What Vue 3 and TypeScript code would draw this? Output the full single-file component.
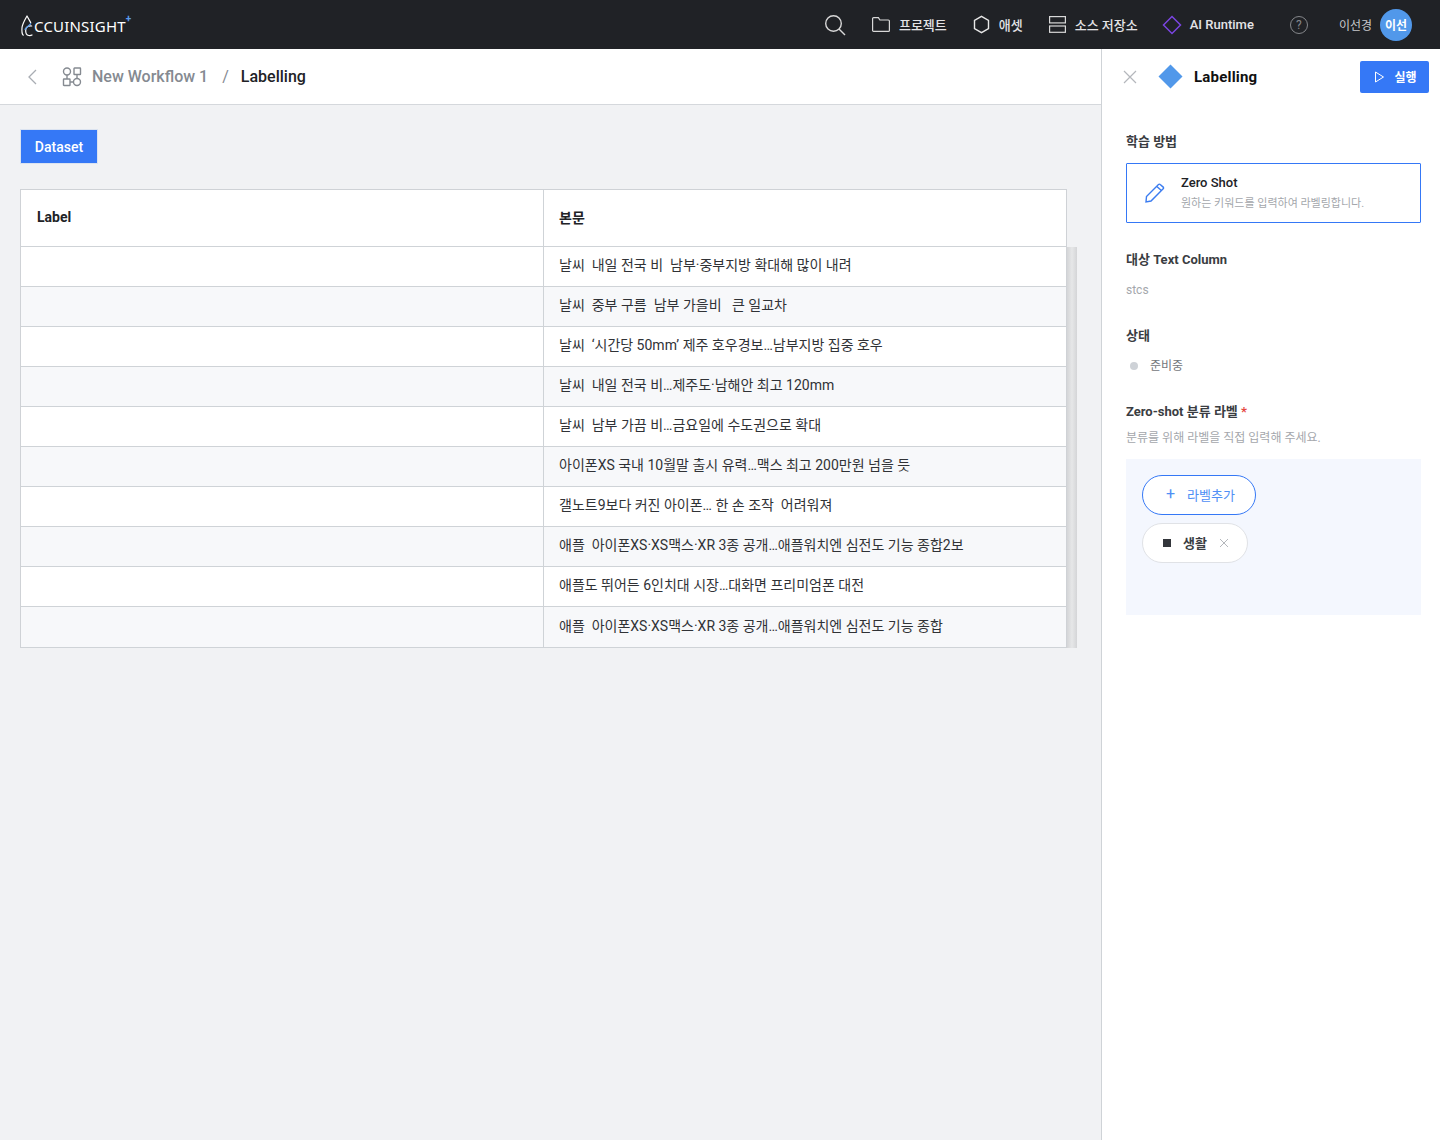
<script setup lang="ts">
interface Row {
  label: string;
  body: string;
}

const rows: Row[] = [
  { label: '', body: '날씨  내일 전국 비  남부·중부지방 확대해 많이 내려' },
  { label: '', body: '날씨  중부 구름  남부 가을비   큰 일교차' },
  { label: '', body: '날씨  ‘시간당 50mm’ 제주 호우경보…남부지방 집중 호우' },
  { label: '', body: '날씨  내일 전국 비…제주도·남해안 최고 120mm' },
  { label: '', body: '날씨  남부 가끔 비…금요일에 수도권으로 확대' },
  { label: '', body: '아이폰XS 국내 10월말 출시 유력…맥스 최고 200만원 넘을 듯' },
  { label: '', body: '갤노트9보다 커진 아이폰… 한 손 조작  어려워져' },
  { label: '', body: '애플  아이폰XS·XS맥스·XR 3종 공개…애플워치엔 심전도 기능 종합2보' },
  { label: '', body: '애플도 뛰어든 6인치대 시장…대화면 프리미엄폰 대전' },
  { label: '', body: '애플  아이폰XS·XS맥스·XR 3종 공개…애플워치엔 심전도 기능 종합' },
];
</script>

<template>
  <div class="app">
    <header class="topbar">
      <div class="logo">
        <svg width="16" height="22" viewBox="0 0 16 22" fill="none">
          <path d="M10.700 7.700C9.500 5.500 8.200 3 7 1C5 4.500 2.500 8.500 2 12.700C1.700 15.800 2 18.800 3.200 20.200" stroke="#fff" stroke-width="1.200" stroke-linecap="round" stroke-linejoin="round" />
          <path d="M11.700 11C8.500 10.800 6 12 5.700 15C5.500 18 6.800 20.200 8.800 20.500C10.500 20.700 11.500 20.300 12 20" stroke="#fff" stroke-width="1.200" stroke-linecap="round" />
          <path d="M5 14.300L10.700 8.700" stroke="#5b9bea" stroke-width="1.200" stroke-linecap="round" />
        </svg>
        <span class="logo-text">CCUINSIGHT</span>
        <span class="logo-plus">+</span>
      </div>
      <nav class="topnav">
        <svg class="search" width="22" height="22" viewBox="0 0 22 22" fill="none" stroke="#d8d8d8" stroke-width="1.400">
          <circle cx="9.500" cy="9.500" r="7.800" />
          <path d="M15 15l6 6" />
        </svg>
        <a class="nav-item project">
          <svg width="18" height="15" viewBox="0 0 18 15" fill="none" stroke="#d8d8d8" stroke-width="1.200">
            <path d="M.600 1.600a1 1 0 0 1 1-1h4.800l1.500 2.400h8.500a1 1 0 0 1 1 1v9.400a1 1 0 0 1-1 1H1.600a1 1 0 0 1-1-1z" />
          </svg>
          프로젝트
        </a>
        <a class="nav-item asset">
          <svg width="17" height="19" viewBox="0 0 17 19" fill="none" stroke="#e8e8e8" stroke-width="1.400">
            <path d="M8.500 1.300l7 4v8.400l-7 4-7-4V5.300z" />
          </svg>
          애셋
        </a>
        <a class="nav-item source">
          <svg width="17" height="17" viewBox="0 0 17 17" fill="none" stroke="#d8d8d8" stroke-width="1.200">
            <rect x=".600" y=".600" width="15.800" height="6.300" />
            <rect x=".600" y="10" width="15.800" height="6.300" />
          </svg>
          소스 저장소
        </a>
        <a class="nav-item runtime">
          <svg width="20" height="20" viewBox="0 0 20 20" fill="none" stroke="#7a45e0" stroke-width="1.500">
            <path d="M10 1.500L18.500 10L10 18.500L1.500 10z" />
          </svg>
          AI Runtime
        </a>
        <span class="help">?</span>
        <span class="user">이선경</span>
        <span class="avatar">이선</span>
      </nav>
    </header>

    <div class="body">
      <main class="main">
        <div class="crumbs">
          <svg class="back" width="10" height="16" viewBox="0 0 10 16" fill="none" stroke="#a9adb3" stroke-width="1.300">
            <path d="M9 1L2 8l7 7" />
          </svg>
          <svg class="flow" width="20" height="20" viewBox="0 0 20 20" fill="none" stroke="#858a91" stroke-width="1.400">
            <circle cx="5" cy="4.500" r="3.500" />
            <rect x="12" y="1" width="6.500" height="6.500" rx=".5" />
            <rect x="1.500" y="12" width="6.500" height="6.500" rx=".5" />
            <circle cx="15" cy="15" r="3.500" />
            <path d="M8 15h3.500M5 8v4M15 7.500v4" />
          </svg>
          <span class="crumb-parent">New Workflow 1</span>
          <span class="crumb-sep">/</span>
          <span class="crumb-current">Labelling</span>
        </div>

        <div class="content">
          <button class="dataset" type="button">Dataset</button>
          <div class="table-wrap">
            <div class="table">
              <div class="row head">
                <div class="cell">Label</div>
                <div class="cell">본문</div>
              </div>
              <div v-for="(row, i) in rows" :key="i" class="row" :class="{ odd: i % 2 === 1 }">
                <div class="cell">{{ row.label }}</div>
                <div class="cell">{{ row.body }}</div>
              </div>
            </div>
            <div class="scroll"></div>
          </div>
        </div>
      </main>

      <aside class="panel">
        <div class="panel-head">
          <svg class="close" width="14" height="14" viewBox="0 0 14 14" fill="none" stroke="#b4b7bc" stroke-width="1.200">
            <path d="M1 1l12 12M13 1L1 13" />
          </svg>
          <span class="diamond"></span>
          <span class="panel-title">Labelling</span>
          <button class="run" type="button">
            <svg width="11" height="12" viewBox="0 0 11 12" fill="none" stroke="#fff" stroke-width="1">
              <path d="M1.500 1l8 5-8 5z" />
            </svg>
            실행
          </button>
        </div>

        <div class="panel-body">
          <h4 class="section-title">학습 방법</h4>
          <div class="method">
            <svg width="22" height="22" viewBox="0 0 22 22" fill="none" stroke="#3b7cf0" stroke-width="1.400">
              <path d="M2.500 14.500L14.500 2.500a1.200 1.200 0 0 1 1.700 0l3 2.600a1.200 1.200 0 0 1 0 1.700L7 19l-5 1z" />
              <path d="M12.800 4.500l4.600 4" />
            </svg>
            <div>
              <div class="method-name">Zero Shot</div>
              <div class="method-desc">원하는 키워드를 입력하여 라벨링합니다.</div>
            </div>
          </div>

          <h4 class="section-title column-title">대상 Text Column</h4>
          <div class="muted stcs">stcs</div>

          <h4 class="section-title state-title">상태</h4>
          <div class="state"><i class="dot"></i>준비중</div>

          <h4 class="section-title zero-title">Zero-shot 분류 라벨 <em>*</em></h4>
          <div class="muted hint">분류를 위해 라벨을 직접 입력해 주세요.</div>

          <div class="labels">
            <button class="add" type="button"><span class="plus">+</span>라벨추가</button>
            <div class="tag">
              <i class="square"></i>
              <span class="tag-name">생활</span>
              <svg width="10" height="10" viewBox="0 0 10 10" fill="none" stroke="#b4b7bc" stroke-width="1">
                <path d="M1 1l8 8M9 1L1 9" />
              </svg>
            </div>
          </div>
        </div>
      </aside>
    </div>
  </div>
</template>

<style>
html,
body {
  margin: 0;
  background: #fff;
}
</style>

<style scoped>
.app {
  display: flex;
  flex-direction: column;
  height: 1140px;
  overflow: hidden;
  font-family: Roboto, "Noto Sans CJK KR", sans-serif;
  color: #212226;
}
.topbar {
  display: flex;
  align-items: center;
  justify-content: space-between;
  flex: none;
  height: 49px;
  padding: 0 28px 0 20px;
  box-sizing: border-box;
  background: #202226;
}
.logo {
  display: flex;
  align-items: flex-end;
  color: #fff;
  height: 24px;
}
.logo-text {
  margin: 0 0 1px -2px;
  font-family: "Noto Sans", sans-serif;
  font-size: 15px;
  line-height: 20px;
  letter-spacing: 0.2px;
}
.logo-plus {
  align-self: flex-start;
  margin-top: 2px;
  color: #5b9bea;
  font-size: 10px;
  font-weight: 700;
  line-height: 8px;
}
.topnav {
  display: flex;
  align-items: center;
}
.search {
  margin-right: 26px;
}
.nav-item {
  display: flex;
  align-items: center;
  gap: 9px;
  color: #e4e4e6;
  font-size: 13px;
  font-weight: 500;
}
.project {
  margin-right: 26px;
}
.asset {
  margin-right: 26px;
}
.source {
  margin-right: 24px;
}
.runtime {
  gap: 8px;
  margin-right: 36px;
}
.help {
  display: flex;
  align-items: center;
  justify-content: center;
  width: 16px;
  height: 16px;
  border: 1px solid #85878b;
  border-radius: 50%;
  color: #85878b;
  font-size: 12px;
}
.user {
  margin: 0 8px 0 31px;
  color: #c8c9cc;
  font-size: 12px;
}
.avatar {
  display: flex;
  align-items: center;
  justify-content: center;
  width: 32px;
  height: 32px;
  border-radius: 50%;
  background: #5198ea;
  color: #fff;
  font-size: 12px;
  font-weight: 700;
}
.body {
  display: flex;
  flex: 1;
  min-height: 0;
}
.main {
  flex: none;
  width: 1101px;
  background: #f1f2f4;
}
.crumbs {
  display: flex;
  align-items: center;
  height: 55px;
  padding-left: 27px;
  border-bottom: 1px solid #d5d8dc;
  background: #fff;
}
.flow {
  margin-left: 25px;
}
.crumb-parent {
  margin-left: 10px;
  color: #858a91;
  font-size: 16px;
  font-weight: 500;
}
.crumb-sep {
  margin: 0 12px 0 14px;
  color: #858a91;
  font-size: 16px;
}
.crumb-current {
  font-size: 16px;
  font-weight: 500;
}
.content {
  padding: 24px 24px 0 20px;
}
.dataset {
  display: block;
  width: 78px;
  height: 35px;
  padding: 0;
  border: 1px solid #dbe3f0;
  background: #3578f6;
  color: #fff;
  font: 500 14px Roboto, sans-serif;
}
.table-wrap {
  display: flex;
  margin-top: 25px;
}
.table {
  flex: none;
  width: 1047px;
  box-sizing: border-box;
  border: 1px solid #cfd2d6;
  border-bottom: 0;
  background: #fff;
}
.row {
  display: grid;
  grid-template-columns: 523px 1fr;
  height: 40px;
  box-sizing: border-box;
  border-bottom: 1px solid #cfd3d7;
}
.row:last-child {
  height: 41px;
}
.row.odd {
  background: #f7f8fa;
}
.row.head {
  height: 57px;
  font-size: 14px;
  font-weight: 700;
}
.cell {
  display: flex;
  align-items: center;
  padding: 0 16px 5px;
  font-size: 14px;
  color: #303236;
  white-space: pre;
}
.cell:first-child {
  border-right: 1px solid #cfd3d7;
}
.cell:last-child {
  padding-left: 15px;
}
.head .cell {
  padding-bottom: 2px;
  color: #212226;
  font-weight: 700;
}
.scroll {
  flex: none;
  width: 10px;
  margin-top: 58px;
  background: linear-gradient(90deg, #d4d5d7, #e6e7e8 50%, #d4d5d7);
}
.panel {
  flex: 1;
  box-sizing: border-box;
  border-left: 1px solid #cfd3d7;
  background: #fff;
}
.panel-head {
  display: flex;
  align-items: center;
  height: 55px;
  padding: 0 11px 0 21px;
}
.diamond {
  width: 17px;
  height: 17px;
  margin-left: 25px;
  background: #5198ea;
  transform: rotate(45deg);
}
.panel-title {
  margin-left: 15px;
  font-size: 15px;
  font-weight: 700;
  letter-spacing: 0.2px;
  color: #111;
}
.run {
  display: flex;
  align-items: center;
  justify-content: center;
  gap: 9px;
  width: 69px;
  height: 32px;
  margin-left: auto;
  padding: 0 0 0 2px;
  border: 0;
  border-radius: 2px;
  background: #3578f6;
  color: #fff;
  font: 700 12px Roboto, "Noto Sans CJK KR", sans-serif;
}
.panel-body {
  padding: 29px 19px 0 24px;
}
.section-title {
  margin: 0;
  color: #3a3d42;
  font-size: 13px;
  font-weight: 700;
  line-height: 18px;
}
.section-title em {
  color: #e5483f;
  font-style: normal;
}
.method {
  display: flex;
  align-items: center;
  gap: 15px;
  height: 60px;
  margin-top: 12px;
  padding-left: 17px;
  box-sizing: border-box;
  border: 1px solid #3578f6;
  border-radius: 1px;
}
.method-name {
  font-size: 13px;
  font-weight: 500;
  line-height: 16px;
  color: #212226;
}
.method-desc {
  margin-top: 5px;
  color: #a4a7ac;
  font-size: 11px;
  line-height: 15px;
}
.column-title {
  margin-top: 28px;
}
.muted {
  color: #a4a7ac;
  font-size: 12px;
}
.stcs {
  margin-top: 14px;
  line-height: 14px;
}
.state-title {
  margin-top: 30px;
}
.state {
  display: flex;
  align-items: center;
  margin-top: 13px;
  color: #74777c;
  font-size: 12px;
  line-height: 16px;
}
.dot {
  width: 8px;
  height: 8px;
  margin: 0 12px 0 4px;
  border-radius: 50%;
  background: #ced2d7;
}
.zero-title {
  margin-top: 29px;
}
.hint {
  margin-top: 9px;
  line-height: 16px;
}
.labels {
  display: flex;
  flex-direction: column;
  align-items: flex-start;
  gap: 8px;
  height: 156px;
  margin-top: 13px;
  padding: 16px;
  box-sizing: border-box;
  background: #f4f7fe;
}
.add {
  display: flex;
  align-items: center;
  justify-content: center;
  gap: 12px;
  width: 114px;
  height: 40px;
  padding: 0 0 2px 3px;
  border: 1px solid #3578f6;
  border-radius: 20px;
  background: #fff;
  color: #4f8ff5;
  font: 400 13px Roboto, "Noto Sans CJK KR", sans-serif;
}
.plus {
  font-size: 16px;
  line-height: 16px;
}
.tag {
  display: flex;
  align-items: center;
  width: 106px;
  height: 40px;
  padding-left: 20px;
  box-sizing: border-box;
  border: 1px solid #e0e2e6;
  border-radius: 20px;
  background: #fff;
  color: #3a3d42;
  font-size: 13px;
  font-weight: 700;
}
.tag-name {
  margin-bottom: 2px;
}
.square {
  width: 8px;
  height: 8px;
  margin-right: 12px;
  background: #33363b;
}
.tag svg {
  margin-left: 12px;
}
</style>
